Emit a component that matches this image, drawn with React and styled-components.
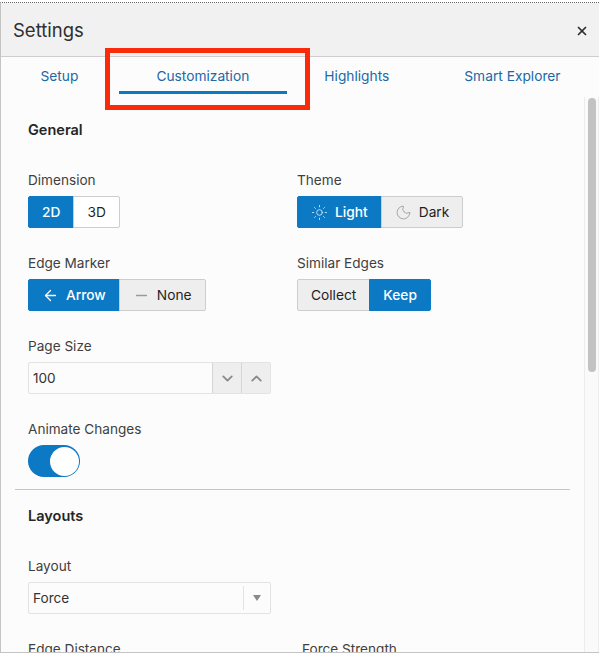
import React from 'react';
import styled, { createGlobalStyle } from 'styled-components';
import { ArrowLeft, Minus, Sun, Moon, ChevronDown, ChevronUp, X } from 'lucide-react';

const Global = createGlobalStyle`
  html, body {
    margin: 0;
    padding: 0;
    background: #fff;
  }
  * {
    box-sizing: border-box;
  }
`;

const Dialog = styled.div`
  position: relative;
  width: 599px;
  height: 651px;
  margin-top: 2px;
  display: flex;
  flex-direction: column;
  overflow: hidden;
  background: #fcfcfc;
  font-family: Inter, 'Liberation Sans', sans-serif;
  color: #333;
  border-top: 1px dotted #666;
  border-left: 1px solid #c4c4c4;
  border-bottom: 1px solid #c4c4c4;
`;

const Header = styled.header`
  flex: none;
  height: 54px;
  display: flex;
  align-items: center;
  justify-content: space-between;
  padding: 0 10px 0 12px;
  background: #f1f1f1;
  border-bottom: 1px solid #cfcfcf;
`;

const Title = styled.h1`
  margin: 0;
  font-size: 18.5px;
  font-weight: 400;
  color: #2f2f2f;
`;

const Close = styled.button`
  display: flex;
  padding: 0;
  margin-top: 3px;
  border: 0;
  background: none;
  color: #2f2f2f;
`;

const Tabs = styled.nav`
  flex: none;
  height: 40px;
  display: flex;
  padding-left: 2px;
`;

const Tab = styled.div`
  height: 37px;
  margin-right: ${(p) => p.$gap || 0}px;
  padding: 10px 37.5px 0;
  font-size: 13.75px;
  line-height: 18px;
  white-space: nowrap;
  color: #1a6aa5;
  border-bottom: 3px solid ${(p) => (p.$active ? '#0b79c4' : 'transparent')};
`;

const Main = styled.div`
  flex: 1;
  min-height: 0;
  display: flex;
`;

const Content = styled.div`
  flex: 1;
  min-width: 0;
  padding: 23px 14px 0 14px;
  overflow: hidden;
`;

const Section = styled.section`
  padding: 0 0 0 13px;
`;

const SectionTitle = styled.h2`
  margin: 0 0 32px;
  font-size: 14.5px;
  line-height: 20px;
  font-weight: 600;
  color: #262626;
`;

const Row = styled.div`
  display: grid;
  grid-template-columns: ${(p) => p.$first || 269}px 1fr;
  margin-bottom: 27px;
`;

const Field = styled.div`
  min-width: 0;
`;

const Label = styled.div`
  height: 17px;
  margin-bottom: 7px;
  font-size: 13.6px;
  line-height: 17px;
  color: #404040;
`;

const Segments = styled.div`
  display: inline-flex;
`;

const Segment = styled.div`
  height: 32px;
  display: flex;
  align-items: center;
  gap: 7px;
  padding: 0 13px;
  font-size: 13.75px;
  font-weight: ${(p) => (p.$on ? 500 : 400)};
  color: ${(p) => (p.$on ? '#fff' : '#1f1f1f')};
  background: ${(p) => (p.$on ? '#0b79c4' : p.$plain ? '#fff' : '#eeeeee')};
  border: 1px solid ${(p) => (p.$on ? '#0b79c4' : '#cdcdcd')};
  margin-left: ${(p) => (p.$next ? -1 : 0)}px;
  border-radius: ${(p) => (p.$next ? '0 2px 2px 0' : '2px 0 0 2px')};
`;

const Control = styled.div`
  width: 243px;
  height: 32px;
  display: flex;
  align-items: center;
  background: #fcfcfc;
  border: 1px solid #e3e3e3;
  border-radius: 2px;
  font-size: 13.6px;
  color: #333;
`;

const Value = styled.div`
  flex: 1;
  padding-left: 4px;
`;

const Step = styled.div`
  width: 29px;
  height: 100%;
  display: flex;
  align-items: center;
  justify-content: center;
  background: #eeeeee;
  border-left: 1px solid #d5d5d5;
  color: #8a8a8a;
`;

const Caret = styled.div`
  width: 27px;
  height: 24px;
  display: flex;
  align-items: center;
  justify-content: center;
  border-left: 1px solid #e3e3e3;
  &::after {
    content: '';
    border-top: 6px solid #8a8a8a;
    border-left: 4.5px solid transparent;
    border-right: 4.5px solid transparent;
  }
`;

const Toggle = styled.div`
  width: 52px;
  height: 32px;
  display: flex;
  justify-content: flex-end;
  align-items: center;
  padding-right: 1px;
  background: #0b79c4;
  border-radius: 16px;
`;

const Knob = styled.div`
  width: 29px;
  height: 29px;
  border-radius: 50%;
  background: #fff;
`;

const Divider = styled.hr`
  margin: 12px 0 16px;
  border: 0;
  border-top: 1px solid #c4c4c4;
`;

const Track = styled.div`
  flex: none;
  width: 15px;
  padding: 0 2px 0 3px;
  background: #fafafa;
  border-left: 1px solid #ececec;
  border-right: 1px solid #ececec;
`;

const Thumb = styled.div`
  width: 8px;
  height: 274px;
  margin-top: 1px;
  border-radius: 4px;
  background: #c2c2c2;
`;

const Callout = styled.div`
  position: absolute;
  left: 104px;
  top: 45px;
  width: 205px;
  height: 62px;
  border: 5px solid #fb2a0a;
  pointer-events: none;
`;

export default function App() {
  return (
    <>
      <Global />
      <Dialog>
        <Header>
          <Title>Settings</Title>
          <Close>
            <X size={14} strokeWidth={3} />
          </Close>
        </Header>
        <Tabs>
          <Tab $gap={3}>Setup</Tab>
          <Tab $active>Customization</Tab>
          <Tab>Highlights</Tab>
          <Tab>Smart Explorer</Tab>
        </Tabs>
        <Main>
          <Content>
            <Section>
              <SectionTitle>General</SectionTitle>
              <Row>
                <Field>
                  <Label>Dimension</Label>
                  <Segments>
                    <Segment $on>2D</Segment>
                    <Segment $next $plain>3D</Segment>
                  </Segments>
                </Field>
                <Field>
                  <Label>Theme</Label>
                  <Segments>
                    <Segment $on>
                      <Sun size={17} strokeWidth={1} />
                      Light
                    </Segment>
                    <Segment $next>
                      <Moon size={17} strokeWidth={1} color="#8a8a8a" />
                      Dark
                    </Segment>
                  </Segments>
                </Field>
              </Row>
              <Row>
                <Field>
                  <Label>Edge Marker</Label>
                  <Segments>
                    <Segment $on>
                      <ArrowLeft size={17} strokeWidth={1.8} />
                      Arrow
                    </Segment>
                    <Segment $next>
                      <Minus size={17} strokeWidth={1.8} color="#9a9a9a" />
                      None
                    </Segment>
                  </Segments>
                </Field>
                <Field>
                  <Label>Similar Edges</Label>
                  <Segments>
                    <Segment>Collect</Segment>
                    <Segment $on $next>Keep</Segment>
                  </Segments>
                </Field>
              </Row>
              <Row>
                <Field>
                  <Label>Page Size</Label>
                  <Control>
                    <Value>100</Value>
                    <Step><ChevronDown size={17} strokeWidth={2.6} /></Step>
                    <Step><ChevronUp size={17} strokeWidth={2.6} /></Step>
                  </Control>
                </Field>
              </Row>
              <Field>
                <Label>Animate Changes</Label>
                <Toggle><Knob /></Toggle>
              </Field>
            </Section>
            <Divider />
            <Section>
              <SectionTitle>Layouts</SectionTitle>
              <Row>
                <Field>
                  <Label>Layout</Label>
                  <Control>
                    <Value>Force</Value>
                    <Caret />
                  </Control>
                </Field>
              </Row>
              <Row $first={274}>
                <Field>
                  <Label>Edge Distance</Label>
                </Field>
                <Field>
                  <Label>Force Strength</Label>
                </Field>
              </Row>
            </Section>
          </Content>
          <Track>
            <Thumb />
          </Track>
        </Main>
        <Callout />
      </Dialog>
    </>
  );
}
